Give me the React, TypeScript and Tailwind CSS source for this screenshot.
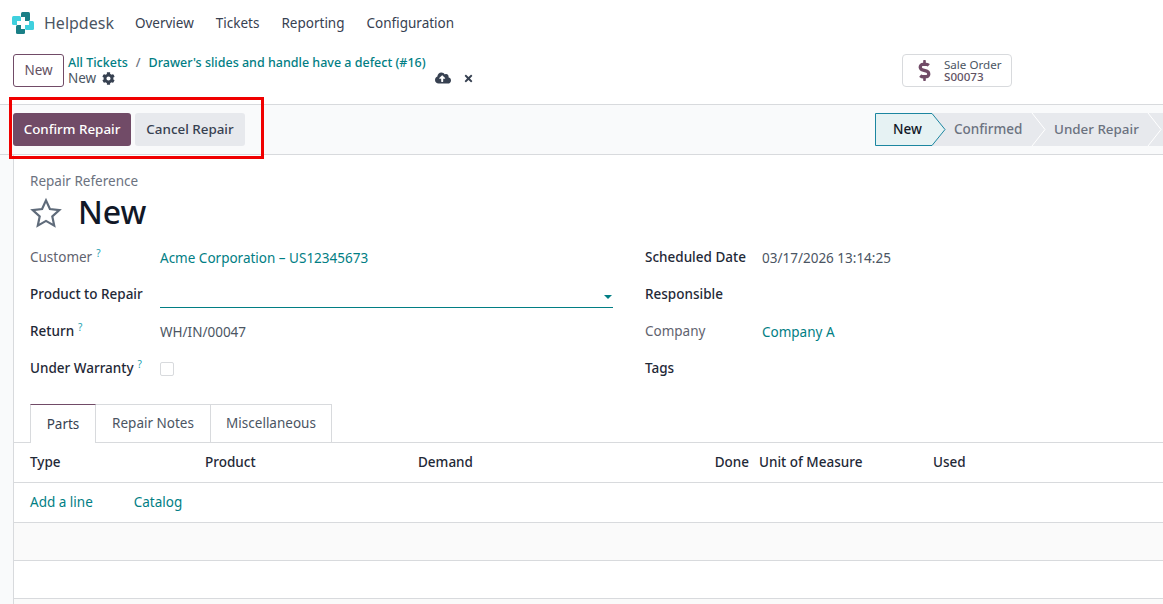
import { FaCog, FaTimes, FaCloudUploadAlt, FaDollarSign } from 'react-icons/fa'

function Help() {
  return <sup className="relative -top-[5px] ml-1 text-[10px] font-normal text-[#1f9fb0]">?</sup>
}

function FieldLabel({ children, bold, help }: { children: string; bold?: boolean; help?: boolean }) {
  return (
    <div className={`w-[130px] shrink-0 ${bold ? 'font-medium text-[#1f2937]' : 'text-[#5f636f]'}`}>
      {children}
      {help && <Help />}
    </div>
  )
}

function Logo() {
  return (
    <svg width="22" height="22" viewBox="0 0 22 22">
      <rect x="9" y="0" width="9" height="9" rx="1.5" fill="#1a7f86" />
      <rect x="0" y="4" width="9" height="9" rx="1.5" fill="#3fd0de" />
      <rect x="13" y="9" width="9" height="9" rx="1.5" fill="#3fd0de" />
      <rect x="4" y="13" width="9" height="9" rx="1.5" fill="#1a7f86" />
      <path d="M9 5h4v4h4v4h-4v4H9v-4H5V9h4z" fill="#fff" />
    </svg>
  )
}

function StatusBar() {
  return (
    <div className="relative flex h-[33px] w-[288px] items-center pl-[18px] pb-px font-medium text-[#6b7280]">
      <svg className="absolute inset-0" width="288" height="33" viewBox="0 0 288 33">
        <rect x="57" y="0" width="231" height="33" fill="#e7e9ed" />
        <path d="M.5.5H57L70 16.5 57 32.5H.5z" fill="#e6f2f3" stroke="#1c86a0" />
        <path d="M157 0l13 16.5L157 33" fill="none" stroke="#fff" />
        <path d="M273 0l13 16.5L273 33" fill="none" stroke="#fff" />
      </svg>
      <span className="relative w-[61px] text-[#111827]">New</span>
      <span className="relative w-[100px]">Confirmed</span>
      <span className="relative whitespace-nowrap text-[13.4px]">Under Repair</span>
    </div>
  )
}

export default function App() {
  return (
    <div className="relative h-[604px] w-[1163px] overflow-hidden bg-white font-['Noto_Sans',sans-serif] text-[13.5px] text-[#374151]">
      {/* top nav */}
      <nav className="flex h-[46px] items-center pl-[12px]">
        <Logo />
        <span className="ml-[10px] text-[16px] text-[#4b5563]">Helpdesk</span>
        <div className="ml-[21px] flex gap-[22px] text-[#374151]">
          <span>Overview</span>
          <span>Tickets</span>
          <span>Reporting</span>
          <span>Configuration</span>
        </div>
      </nav>

      {/* breadcrumb row */}
      <div className="flex h-[58px] items-start pl-[13px] pt-[8px]">
        <button className="h-[33px] w-[51px] rounded-[3px] border border-[#714b67] pb-px text-[#64505f]">New</button>
        <div className="ml-[4px] w-[367px] shrink-0 leading-[16px]">
          <div className="flex gap-[8px] whitespace-nowrap pt-px text-[12.5px] font-medium text-[#017e84]">
            <span>All Tickets</span>
            <span className="text-[#6b7280]">/</span>
            <span>Drawer's slides and handle have a defect (#16)</span>
          </div>
          <div className="-mt-px flex items-center gap-[6px] text-[#4b5563]">
            New <FaCog size={13} className="text-[#374151]" />
          </div>
        </div>
        <div className="mt-[16px] flex items-center gap-[12px]">
          <FaCloudUploadAlt size={16} className="text-[#374151]" />
          <FaTimes size={11} className="text-[#374151]" />
        </div>
        <div className="ml-[428px] flex h-[33px] w-[110px] shrink-0 items-center rounded-[4px] border border-[#d8dadd] pl-[14px]">
          <FaDollarSign size={21} className="ml-px mr-[13px] w-[13px] shrink-0 text-[#714b67]" />
          <div className="text-[11.6px] leading-[12px] text-[#4b5563]">
            Sale Order
            <div className="font-medium text-[#5f5264]">S00073</div>
          </div>
        </div>
      </div>

      {/* control bar */}
      <div className="flex h-[51px] items-center justify-between border-y border-[#d8dadd] bg-[#f9fafb] pl-[13px]">
        <div className="flex gap-[4px]">
          <button className="h-[33px] w-[118px] rounded-[3px] bg-[#714b67] pb-px text-[13.4px] font-medium text-white">Confirm Repair</button>
          <button className="h-[33px] w-[110px] rounded-[3px] bg-[#e7e9ed] pb-px text-[13.4px] font-medium text-[#374151]">Cancel Repair</button>
        </div>
        <StatusBar />
      </div>

      {/* sheet */}
      <div className="bg-[#f9fafb] pl-[13px]">
        <div className="min-h-[450px] border-l border-[#d8dadd] bg-white">
          <div className="px-[16px] pt-[18px]">
            <div className="leading-[16px] text-[#6b7280]">Repair Reference</div>
            <div className="mt-[4px] flex h-[40px] items-center">
              <svg width="32" height="32" viewBox="0 0 32 32" fill="none" stroke="#5f6b7a" strokeWidth="2.2" strokeLinejoin="miter">
                <path d="M16 3.4l3.9 8.6 9.4 1.1-7 6.3 1.9 9.2-8.2-4.7-8.2 4.7 1.9-9.2-7-6.3 9.4-1.1z" />
              </svg>
              <h1 className="ml-[16px] h-[40px] text-[32px] font-medium leading-[38px] text-[#111827]">New</h1>
            </div>

            <div className="mt-[6px] flex">
              <div className="w-[583px] shrink-0">
                <div className="flex h-[37px] items-center">
                  <FieldLabel help>Customer</FieldLabel>
                  <span className="pt-[2px] text-[#017e84]">Acme Corporation – US12345673</span>
                </div>
                <div className="flex h-[37px] items-center">
                  <FieldLabel bold>Product to Repair</FieldLabel>
                  <div className="relative h-[26px] flex-1 border-b border-[#017e84]">
                    <span className="absolute right-[1px] top-[13px] h-0 w-0 border-x-[4px] border-t-[4px] border-x-transparent border-t-[#017e84]" />
                  </div>
                </div>
                <div className="flex h-[37px] items-center">
                  <FieldLabel bold help>Return</FieldLabel>
                  <span className="pt-[2px] text-[#4b5563]">WH/IN/00047</span>
                </div>
                <div className="flex h-[37px] items-center">
                  <FieldLabel bold help>Under Warranty</FieldLabel>
                  <span className="h-[14px] w-[14px] rounded-[2px] border border-[#d8dadd]" />
                </div>
              </div>
              <div className="ml-[32px] flex-1">
                <div className="flex h-[37px] items-center">
                  <div className="w-[117px] shrink-0 font-medium text-[#1f2937]">Scheduled Date</div>
                  <span className="pt-[2px] text-[#4b5563]">03/17/2026 13:14:25</span>
                </div>
                <div className="flex h-[37px] items-center font-medium text-[#1f2937]">Responsible</div>
                <div className="flex h-[37px] items-center">
                  <div className="w-[117px] shrink-0 text-[#5f636f]">Company</div>
                  <span className="pt-[2px] text-[#017e84]">Company A</span>
                </div>
                <div className="flex h-[37px] items-center font-medium text-[#1f2937]">Tags</div>
              </div>
            </div>
          </div>

          {/* tabs */}
          <div className="mt-[17px] flex h-[39px] border-b border-[#d8dadd] pl-[16px]">
            <div className="flex h-[39px] w-[66px] items-center justify-center border-x border-t border-x-[#d8dadd] border-t-[#714b67] bg-white text-[#374151]">Parts</div>
            <div className="flex h-[38px] w-[115px] items-center justify-center border-r border-t border-[#d8dadd] text-[#4b5563]">Repair Notes</div>
            <div className="flex h-[38px] w-[121px] items-center justify-center border-r border-t border-[#d8dadd] text-[#4b5563]">Miscellaneous</div>
          </div>

          {/* parts table */}
          <div className="grid h-[40px] grid-cols-[175px_213px_165px_176px_174px_1fr] items-center border-b border-[#d8dadd] pl-[16px] font-medium text-[#1f2937]">
            <span>Type</span>
            <span>Product</span>
            <span>Demand</span>
            <span className="pr-[10px] text-right">Done</span>
            <span>Unit of Measure</span>
            <span>Used</span>
          </div>
          <div className="flex h-[40px] items-center gap-[41px] border-b border-[#d8dadd] pl-[16px] text-[#017e84]">
            <span>Add a line</span>
            <span>Catalog</span>
          </div>
          <div className="h-[38px] border-b border-[#d8dadd] bg-[#fafafa]" />
          <div className="h-[38px] border-b border-[#d8dadd]" />
          <div className="h-[38px] bg-[#fafafa]" />
        </div>
      </div>

      {/* annotation box */}
      <div className="absolute left-[9px] top-[97px] h-[62px] w-[255px] border-[3px] border-[#f00000]" />
    </div>
  )
}
